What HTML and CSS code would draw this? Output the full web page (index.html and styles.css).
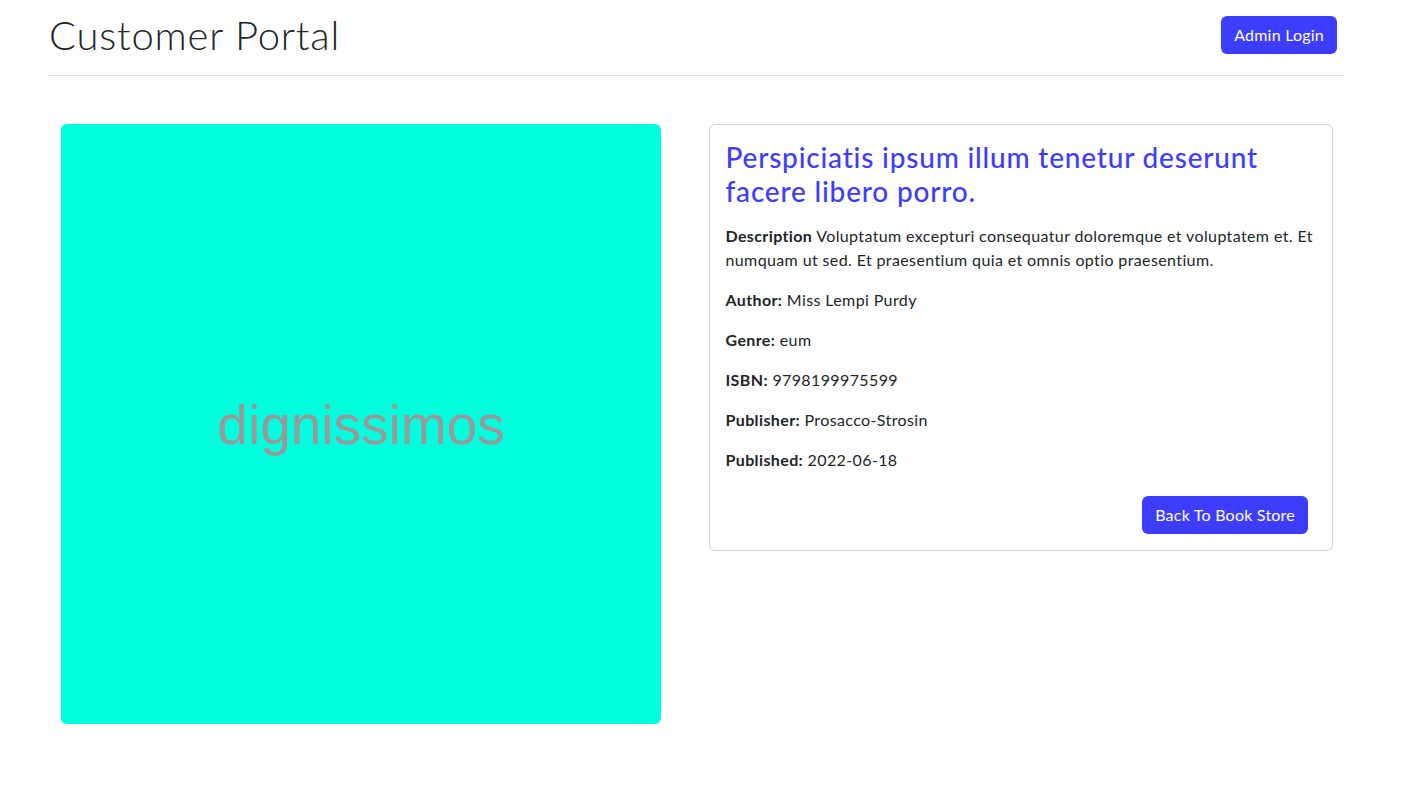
FILE: index.html
```html
<!DOCTYPE html>
<html lang="en">
<head>
<meta charset="utf-8">
<title>Customer Portal</title>
<link rel="stylesheet" href="styles.css">
</head>
<body>
<div class="container">
  <header class="site-header">
    <h1 class="site-title">Customer Portal</h1>
    <a class="btn btn-primary" href="#">Admin Login</a>
  </header>
  <main class="book-row">
    <div class="book-col">
      <div class="cover"><span class="cover-text">dignissimos</span></div>
    </div>
    <div class="book-col">
      <div class="card">
        <h3 class="card-title">Perspiciatis ipsum illum tenetur deserunt facere libero porro.</h3>
        <p><strong>Description</strong> Voluptatum excepturi consequatur doloremque et voluptatem et. Et numquam ut sed. Et praesentium quia et omnis optio praesentium.</p>
        <p><strong>Author:</strong> Miss Lempi Purdy</p>
        <p><strong>Genre:</strong> eum</p>
        <p><strong>ISBN:</strong> 9798199975599</p>
        <p><strong>Publisher:</strong> Prosacco-Strosin</p>
        <p><strong>Published:</strong> 2022-06-18</p>
        <div class="card-actions">
          <a class="btn btn-primary" href="#">Back To Book Store</a>
        </div>
      </div>
    </div>
  </main>
</div>
</body>
</html>
```

FILE: styles.css
```css
* { box-sizing: border-box; }
html, body { margin: 0; padding: 0; background: #fff; }
body {
  font-family: "Lato", "Noto Sans", sans-serif;
  font-size: 16px;
  line-height: 1.5;
  letter-spacing: 0.38px;
  color: #212529;
}
.container {
  width: 1297px;
  margin-left: 48px;
}
.site-header {
  display: flex;
  justify-content: space-between;
  align-items: center;
  padding: 11px 8px 16px 0;
  border-bottom: 1px solid #dee2e6;
}
.site-title {
  margin: 0 0 0 1px;
  font-size: 40px;
  font-weight: 300;
  line-height: 48px;
  letter-spacing: 0.8px;
  color: #212529;
}
.btn {
  display: inline-block;
  padding: 6px 12px;
  font-size: 16px;
  line-height: 24px;
  letter-spacing: 0.22px;
  border-radius: 6px;
  text-decoration: none;
  border: 1px solid transparent;
}
.btn-primary {
  background: #3d3dff;
  color: #fff;
}
.book-row {
  display: flex;
  margin-top: 48px;
}
.book-col {
  flex: 0 0 50%;
  padding: 0 12px;
}
.cover {
  width: 600px;
  height: 600px;
  margin-left: 1px;
  background: #00ffdd;
  border-radius: 6px;
  display: flex;
  align-items: center;
  justify-content: center;
}
.cover-text {
  font-family: "Liberation Sans", Arial, sans-serif;
  font-size: 55px;
  letter-spacing: 0;
  color: #999999;
  line-height: 1;
  margin-top: 3px;
}
.card {
  border: 1px solid rgba(0, 0, 0, 0.175);
  border-radius: 6px;
  padding: 16px;
}
.card-title {
  margin: 0 0 16px;
  font-size: 28px;
  font-weight: 500;
  line-height: 1.2;
  letter-spacing: 0.8px;
  color: #3d3dff;
}
.card p { margin: 0 0 16px; }
.card strong { font-weight: 700; }
.card-actions {
  display: flex;
  justify-content: flex-end;
  padding-right: 8px;
  margin-top: 24px;
}
```
